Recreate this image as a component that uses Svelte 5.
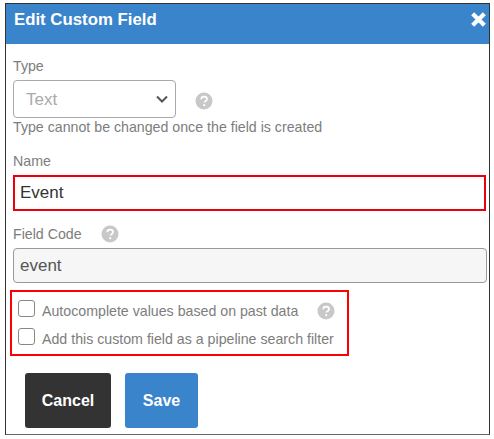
<script>
  let name = $state("Event");
  let code = $state("event");
  let autocomplete = $state(false);
  let pipelineFilter = $state(false);
</script>

{#snippet help()}
  <svg class="help" viewBox="0 0 18 18" width="18" height="18" aria-hidden="true">
    <circle cx="9" cy="9" r="8.5" fill="#c8c8c8" />
    <path d="M6.2 7.2c0-1.6 1.2-2.6 2.9-2.6s2.9 1 2.9 2.4c0 1.2-.7 1.8-1.5 2.3-.6.4-.9.7-.9 1.3" fill="none" stroke="#fff" stroke-width="1.7" />
    <circle cx="9.2" cy="13.2" r="1.1" fill="#fff" />
  </svg>
{/snippet}

<div class="modal">
  <header>
    <h1>Edit Custom Field</h1>
    <button class="close" aria-label="Close">
      <svg viewBox="0 0 16 16" width="17" height="17">
        <path d="M2.5 2.5l11 11M13.5 2.5l-11 11" stroke="#fff" stroke-width="4" fill="none" />
      </svg>
    </button>
  </header>

  <div class="body">
    <label class="type-label" for="type">Type</label>
    <div class="type-row">
      <select id="type">
        <option>Text</option>
      </select>
      {@render help()}
    </div>
    <p class="hint">Type cannot be changed once the field is created</p>

    <label class="name-label" for="name">Name</label>
    <input id="name" class="name" type="text" bind:value={name} />

    <div class="code-label">
      <label for="code">Field Code</label>
      {@render help()}
    </div>
    <input id="code" class="code" type="text" bind:value={code} readonly />

    <div class="options">
      <div class="option">
        <input id="autocomplete" type="checkbox" bind:checked={autocomplete} />
        <label for="autocomplete">Autocomplete values based on past data</label>
        {@render help()}
      </div>
      <div class="option">
        <input id="pipeline" type="checkbox" bind:checked={pipelineFilter} />
        <label for="pipeline">Add this custom field as a pipeline search filter</label>
      </div>
    </div>

    <div class="actions">
      <button class="cancel">Cancel</button>
      <button class="save">Save</button>
    </div>
  </div>
</div>

<style>
  :global(body) {
    background: #fff;
    font-family: "Liberation Sans", Arial, sans-serif;
  }

  .modal {
    box-sizing: border-box;
    width: 485px;
    height: 432px;
    margin: 3px 0 0 5px;
    border: 1px solid #333;
    border-bottom-color: #666;
    background: #fff;
    color: #7d7d7d;
    overflow: hidden;
  }

  header {
    display: flex;
    align-items: flex-start;
    justify-content: space-between;
    height: 40px;
    background: #3a84cc;
    color: #fff;
  }

  h1 {
    margin: 7px 0 0 8px;
    font-size: 16.8px;
    line-height: 18px;
    font-weight: bold;
  }

  .close {
    display: flex;
    padding: 0;
    margin: 7px 2px 0 0;
    border: none;
    background: none;
  }

  .body {
    display: flex;
    flex-direction: column;
    align-items: flex-start;
    padding: 0 0 0 7px;
  }

  label {
    font-size: 14.2px;
    line-height: 16px;
    color: #7d7d7d;
  }

  .type-label {
    margin-top: 14px;
  }

  .type-row {
    display: flex;
    align-items: center;
    gap: 19px;
    margin-top: 6px;
  }

  .type-row .help {
    margin-top: 3px;
  }

  select {
    appearance: none;
    box-sizing: border-box;
    width: 163px;
    height: 38px;
    padding: 0 12px;
    border: 1px solid #aaa;
    border-radius: 4px;
    background: #fff url("data:image/svg+xml,%3Csvg xmlns='http://www.w3.org/2000/svg' width='12' height='8'%3E%3Cpath d='M1 1.5l5 5 5-5' fill='none' stroke='%23555' stroke-width='2'/%3E%3C/svg%3E") no-repeat right 7px center;
    color: #aaa;
    font: 17px "Liberation Sans", Arial, sans-serif;
  }

  .hint {
    margin: 1px 0 0;
    font-size: 14.2px;
    line-height: 16px;
    color: #7d7d7d;
  }

  .name-label {
    margin-top: 18px;
  }

  input[type="text"] {
    box-sizing: border-box;
    font: 17px "Liberation Sans", Arial, sans-serif;
    outline: none;
  }

  .name {
    width: 473px;
    height: 36px;
    margin-top: 6px;
    padding: 0 5px;
    border: 2px solid #e8000d;
    color: #333;
  }

  .code-label {
    display: flex;
    align-items: center;
    gap: 19px;
    margin-top: 14px;
  }

  .code {
    width: 474px;
    height: 35px;
    margin-top: 5px;
    padding: 0 6px;
    border: 1px solid #999;
    border-radius: 4px;
    background: #f6f6f6;
    color: #555;
  }

  .options {
    box-sizing: border-box;
    display: flex;
    flex-direction: column;
    gap: 8px;
    width: 339px;
    height: 66px;
    margin: 7px 0 0 -3px;
    padding: 9px 0 0 6px;
    border: 2px solid #f00;
  }

  .option {
    display: flex;
    align-items: center;
    height: 20px;
  }

  .option label {
    margin-left: 7px;
  }

  .option .help {
    margin-left: 19px;
  }

  input[type="checkbox"] {
    appearance: none;
    box-sizing: border-box;
    width: 17px;
    height: 17px;
    margin: -5px 0 0;
    border: 1px solid #888;
    border-radius: 3px;
    background: #fff;
  }

  .actions {
    display: flex;
    gap: 14px;
    margin: 17px 0 0 12px;
  }

  .actions button {
    height: 55px;
    border: none;
    border-radius: 3px;
    color: #fff;
    font: bold 16px "Liberation Sans", Arial, sans-serif;
  }

  .cancel {
    width: 86px;
    background: #333;
  }

  .save {
    width: 73px;
    background: #3a84cc;
  }
</style>
